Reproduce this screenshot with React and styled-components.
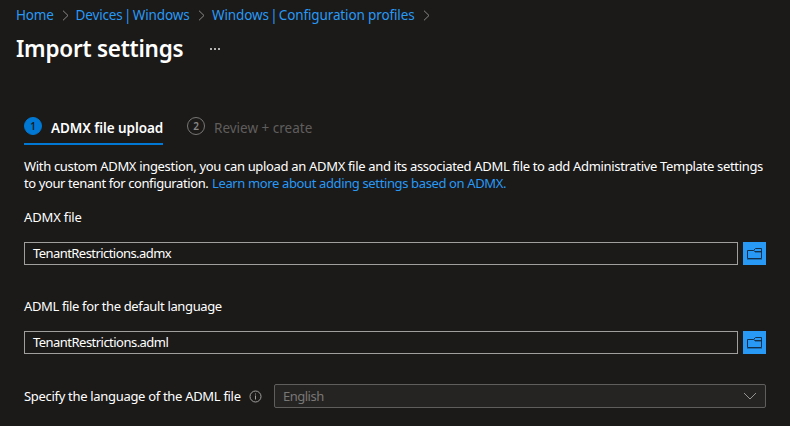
import React from "react";
import styled, { createGlobalStyle } from "styled-components";

const GlobalStyle = createGlobalStyle`
  * { box-sizing: border-box; }
  body {
    margin: 0;
    background: #1b1a19;
    color: #fff;
    font: 13px/17px "Noto Sans", "Open Sans", sans-serif;
    overflow: hidden;
  }
`;

const Page = styled.main`
  width: 790px;
  height: 426px;
  display: flex;
  flex-direction: column;
  background: #1b1a19;
`;

const Text = styled.span`
  white-space: pre;
  letter-spacing: ${(p) => p.$track || 0}px;
`;

const Link = styled(Text)`
  color: #2899f5;
`;

const Breadcrumbs = styled.nav`
  display: flex;
  align-items: center;
  height: 18px;
  margin: 6px 0 0 16px;
  font-size: 13.5px;
  line-height: 18px;
`;

const Crumb = styled(Link)`
  flex: none;
  width: ${(p) => p.$w}px;
`;

const Scope = styled.span`
  word-spacing: -2px;
`;

const Separator = styled.svg`
  flex: none;
  width: 7px;
  height: 11px;
  margin: 1px 7px 0 8px;
  fill: none;
  stroke: #8a8886;
`;

const TitleRow = styled.header`
  display: flex;
  align-items: center;
  height: 32px;
  margin: 9px 0 0 16px;
`;

const Title = styled.h1`
  width: 193px;
  margin: 0;
  font-size: 22.5px;
  line-height: 32px;
  font-weight: 600;
  white-space: nowrap;
  letter-spacing: ${(p) => p.$track}px;
`;

const More = styled.svg`
  width: 12px;
  height: 2px;
  fill: #b5b3b1;
`;

const Tabs = styled.div`
  display: flex;
  gap: 24px;
  height: 28px;
  margin: 52px 0 0 24px;
  font-size: 13.5px;
`;

const Tab = styled.div`
  display: flex;
  width: ${(p) => p.$w}px;
  height: 28px;
  border-bottom: 2px solid ${(p) => (p.$active ? "#0078d4" : "transparent")};
  color: ${(p) => (p.$active ? "#fff" : "#605e5c")};
  font-weight: ${(p) => (p.$active ? 600 : 400)};
`;

const Step = styled.span`
  flex: none;
  display: flex;
  align-items: center;
  justify-content: center;
  width: 18px;
  height: 18px;
  margin-right: 9px;
  border: 1px solid ${(p) => (p.$active ? "#0078d4" : "#797775")};
  border-radius: 50%;
  background: ${(p) => (p.$active ? "#0078d4" : "transparent")};
  color: ${(p) => (p.$active ? "#1b1a19" : "#8a8886")};
  font-size: 10px;
  line-height: 16px;
  font-weight: 600;
`;

const TabLabel = styled(Text)`
  margin-top: 3px;
`;

const Description = styled.p`
  display: flex;
  flex-direction: column;
  height: 34px;
  margin: 13px 0 0 24px;
`;

const Line = styled.span`
  display: flex;
`;

const Lead = styled(Text)`
  width: 188px;
`;

const Field = styled.section`
  display: flex;
  flex-direction: column;
  gap: 16px;
  margin: ${(p) => p.$top}px 24px 0;
`;

const FieldRow = styled.div`
  display: flex;
  gap: 5px;
`;

const Input = styled.div`
  flex: 1;
  display: flex;
  align-items: center;
  height: 23px;
  padding: 0 8px;
  border: 1px solid #a19f9d;
`;

const Browse = styled.button`
  display: flex;
  width: 23px;
  height: 23px;
  padding: 0;
  border: 0;
  background: #2899f5;
`;

const LanguageRow = styled.div`
  display: flex;
  align-items: center;
  height: 24px;
  margin: 30px 24px 0;
`;

const LanguageLabel = styled(Text)`
  width: 225px;
`;

const Info = styled.svg`
  width: 13px;
  height: 13px;
  margin: 1px 12px 0 0;
`;

const Select = styled.div`
  flex: 1;
  display: flex;
  align-items: center;
  justify-content: space-between;
  height: 24px;
  padding: 0 8px;
  border: 1px solid #605e5c;
  border-radius: 2px;
  background: #252423;
  color: #797775;
`;

const Arrow = () => (
  <Separator viewBox="0 0 7 11">
    <path d="M1 .7 6 5.5 1 10.3" />
  </Separator>
);

const BrowseButton = () => (
  <Browse aria-label="Browse">
    <svg width="23" height="23" viewBox="0 0 23 23" fill="none">
      <path d="M4 17.5h15M12 10.5h6.5" stroke="#1d6fb3" />
      <path d="M4.5 8.5v8h14v-10h-6l-2 2h-6M10.5 8.5l1.5 1h6.5" stroke="#12304a" />
    </svg>
  </Browse>
);

const FileField = ({ label, labelTrack, value, track, top }) => (
  <Field $top={top}>
    <Text $track={labelTrack}>{label}</Text>
    <FieldRow>
      <Input><Text $track={track}>{value}</Text></Input>
      <BrowseButton />
    </FieldRow>
  </Field>
);

export default function App() {
  return (
    <Page>
      <GlobalStyle />
      <Breadcrumbs>
        <Crumb $w={37.5} $track={-0.15}>Home</Crumb>
        <Arrow />
        <Crumb $w={114.5} $track={-0.13}><Scope>Devices | Windows</Scope></Crumb>
        <Arrow />
        <Crumb $w={203} $track={-0.13}><Scope>{"Windows | "}</Scope>Configuration profiles</Crumb>
        <Arrow />
      </Breadcrumbs>
      <TitleRow>
        <Title $track={-0.25}>Import settings</Title>
        <More viewBox="0 0 12 2">
          <path d="M1 0h2v2H1zM5 0h2v2H5zM9 0h2v2H9z" />
        </More>
      </TitleRow>
      <Tabs>
        <Tab $active $w={139}>
          <Step $active>1</Step>
          <TabLabel $track={-0.07}>ADMX file upload</TabLabel>
        </Tab>
        <Tab $w={126}>
          <Step>2</Step>
          <TabLabel $track={0}>Review + create</TabLabel>
        </Tab>
      </Tabs>
      <Description>
        <Text $track={-0.325}>With custom ADMX ingestion, you can upload an ADMX file and its associated ADML file to add Administrative Template settings</Text>
        <Line>
          <Lead $track={-0.4}>to your tenant for configuration.</Lead>
          <Link $track={-0.37}>Learn more about adding settings based on ADMX.</Link>
        </Line>
      </Description>
      <FileField top={17} label="ADMX file" labelTrack={-0.15} value="TenantRestrictions.admx" track={-0.56} />
      <FileField top={33} label="ADML file for the default language" labelTrack={-0.36} value="TenantRestrictions.adml" track={-0.53} />
      <LanguageRow>
        <LanguageLabel $track={-0.31}>Specify the language of the ADML file</LanguageLabel>
        <Info viewBox="0 0 13 13" fill="none" stroke="#a19f9d">
          <circle cx="6.5" cy="6.5" r="5.5" />
          <path d="M6.5 5.5v4M6.5 3.5v1" />
        </Info>
        <Select>
          <Text $track={-0.5}>English</Text>
          <svg width="14" height="8" viewBox="0 0 14 8" fill="none" stroke="#979593">
            <path d="M1 1l6 6 6-6" />
          </svg>
        </Select>
      </LanguageRow>
    </Page>
  );
}
